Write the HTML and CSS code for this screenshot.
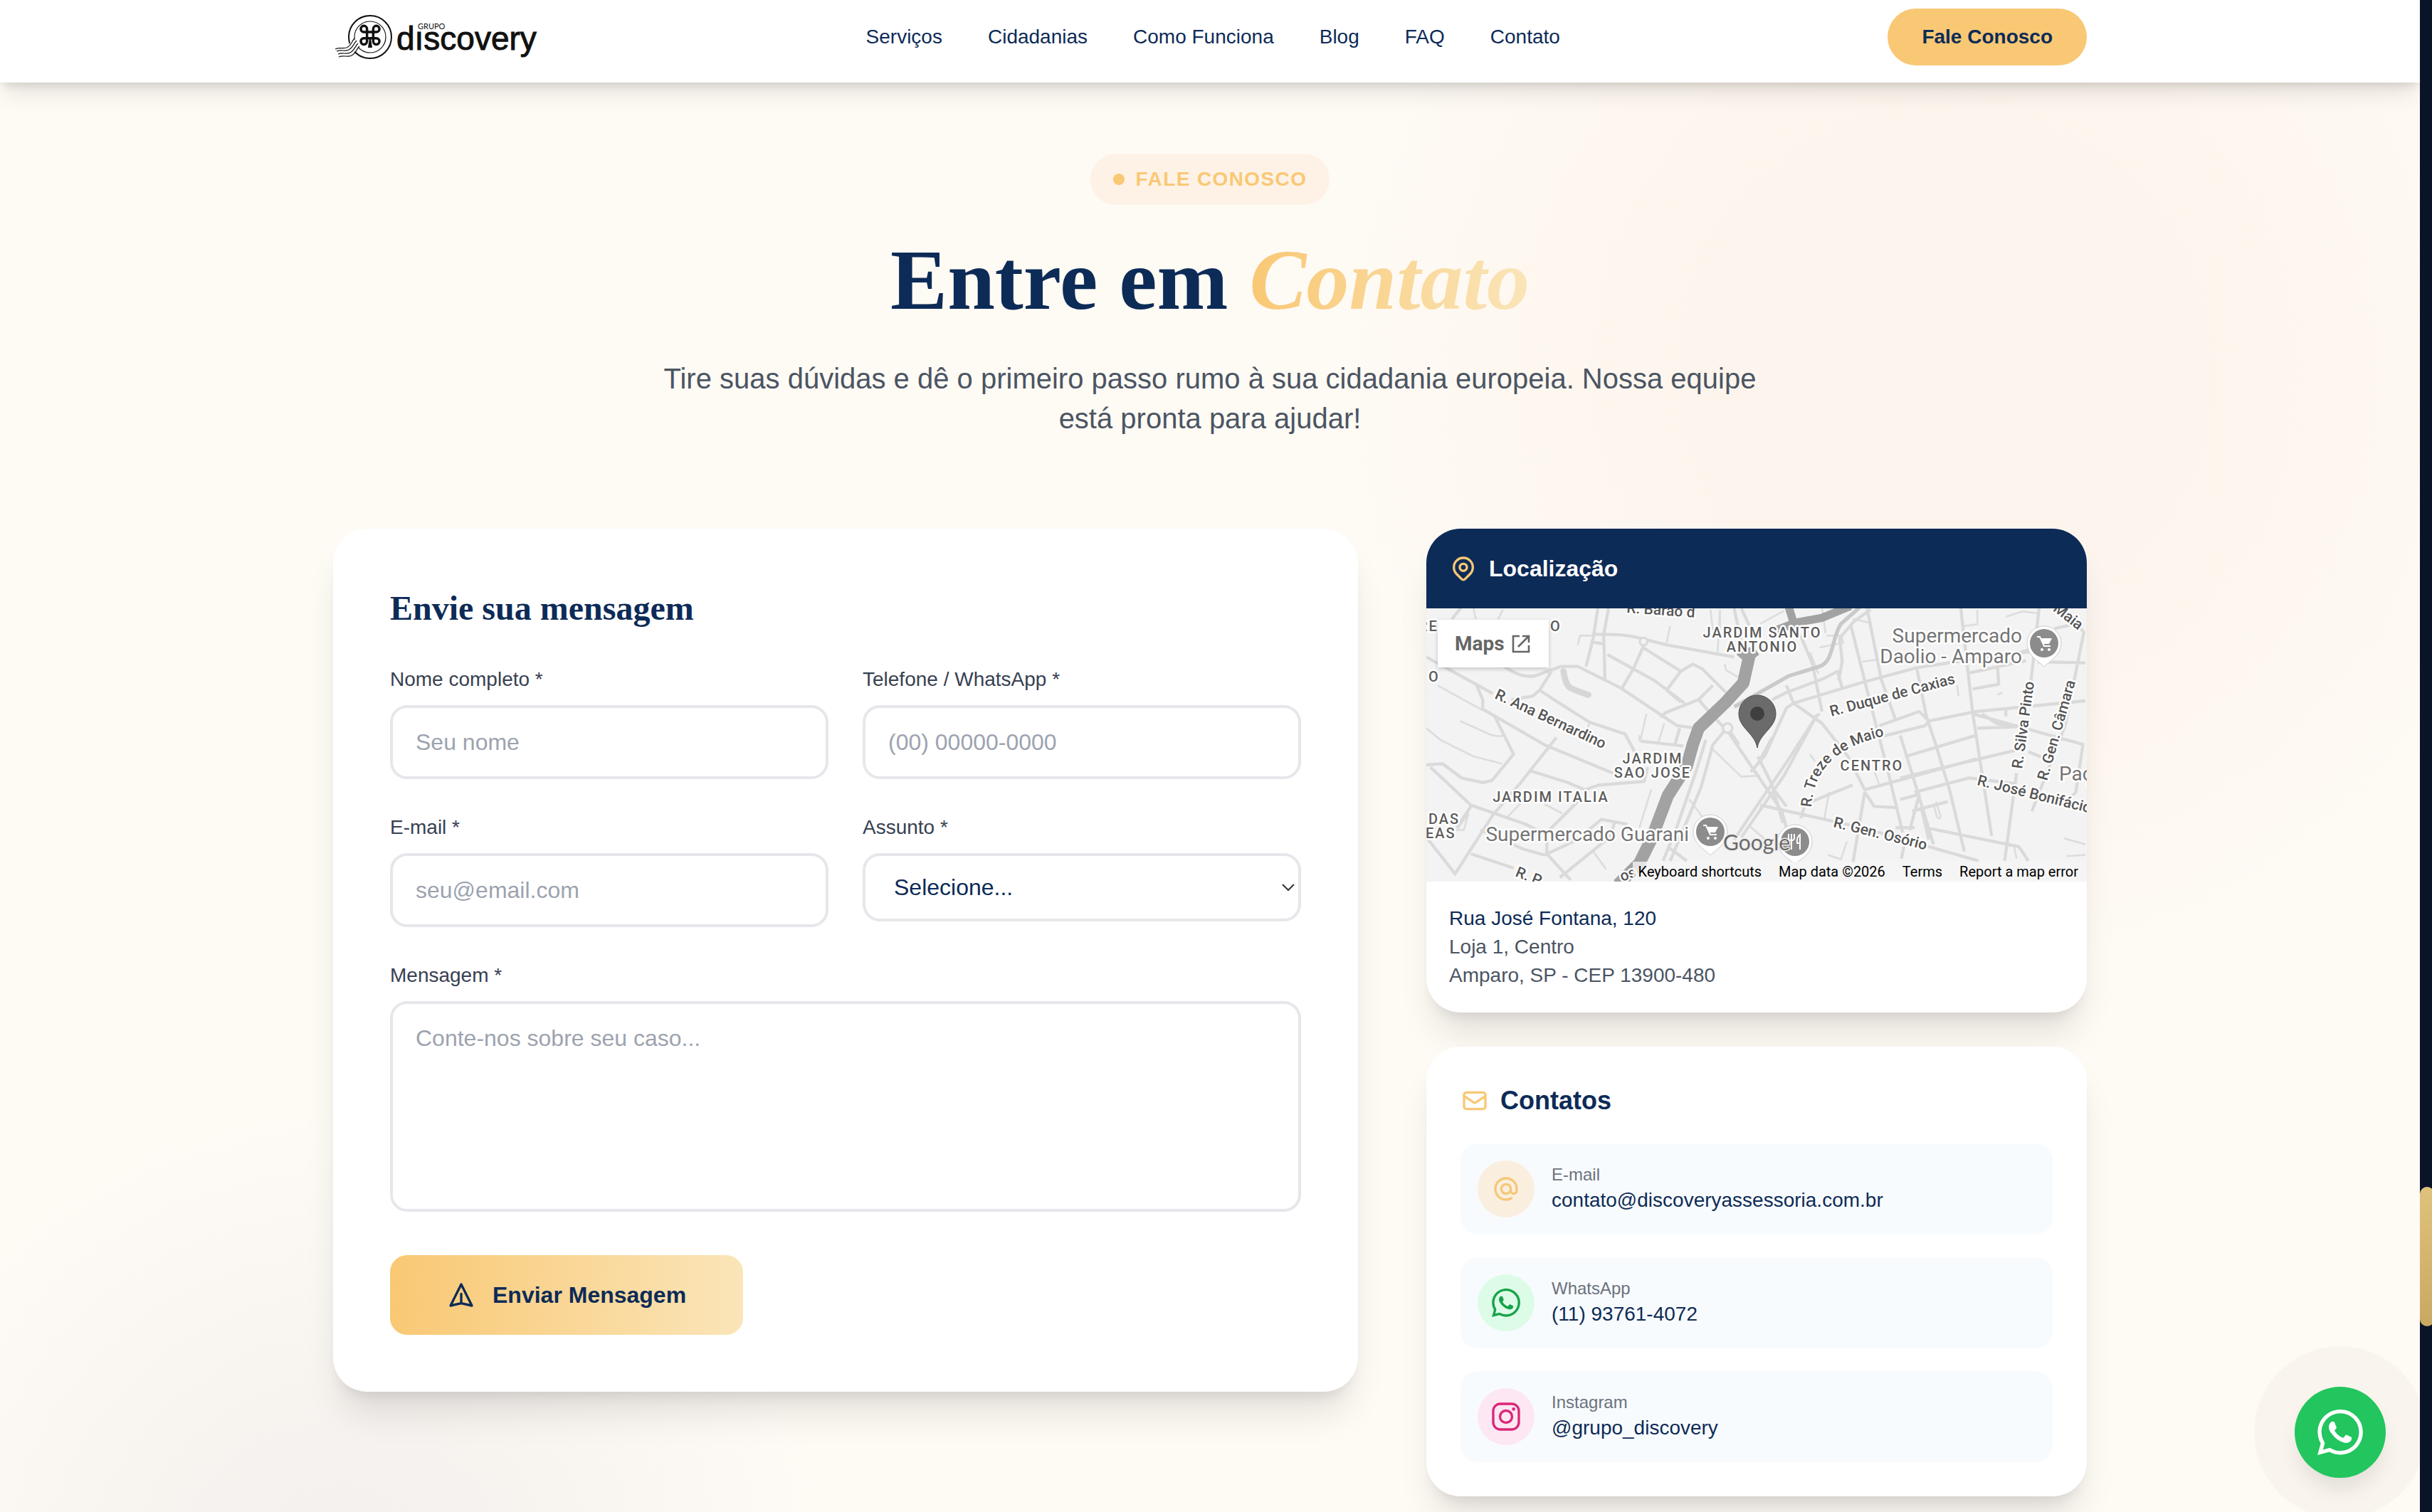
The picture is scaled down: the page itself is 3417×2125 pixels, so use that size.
FILE: index.html
```html
<!doctype html>
<html lang="pt-BR">
<head>
  <meta charset="UTF-8">
  <meta name="viewport" content="width=device-width, initial-scale=1.0">
  <title>Contato - Grupo Discovery</title>
  <link rel="stylesheet" href="styles.css">
</head>
<body>
  <header class="header">
    <div class="container header-inner">
      <a class="logo" href="#">
        <svg width="288" height="80" viewBox="0 0 288 80" role="img" aria-label="Grupo Discovery">
          <circle cx="52" cy="40" r="30" fill="none" stroke="#111" stroke-width="2"/>
          <circle cx="52" cy="40" r="22" fill="none" stroke="#111" stroke-width="1.2"/>
          <!-- clover -->
          <g transform="translate(34.6 20) scale(1.45)" fill="none" stroke="#111" stroke-width="2.4">
            <path d="M18 3a3 3 0 0 0-3 3v12a3 3 0 1 0 3-3H6a3 3 0 1 0 3 3V6a3 3 0 1 0-3 3h12a3 3 0 0 0 0-6z"/>
          </g>
          <path d="M51 42h2l2 13h-6z" fill="#111"/>
          <!-- postmark waves -->
          <path d="M23 58C27 56 30 51 34 47" fill="none" stroke="#fff" stroke-width="13"/>
          <g fill="none" stroke="#111" stroke-width="1.2">
            <path d="M3 57c7-3 10 0 16-2 7-3 7-9 11-13"/>
            <path d="M5 60c7-3 11 1 17-2 6-3 7-9 11-13"/>
            <path d="M7 64c7-3 11 1 17-2 6-3 7-9 11-13"/>
            <path d="M8 68c7-3 12 1 18-2 6-3 7-9 11-13"/>
          </g>
          <text class="logo-name" x="89" y="58">dıscovery</text>
          <text class="logo-group" x="119" y="29">GRUPO</text>
        </svg>
      </a>
      <nav class="nav">
        <a href="#">Serviços</a>
        <a href="#">Cidadanias</a>
        <a href="#">Como Funciona</a>
        <a href="#">Blog</a>
        <a href="#">FAQ</a>
        <a href="#">Contato</a>
      </nav>
      <a class="btn-header" href="#">Fale Conosco</a>
    </div>
  </header>

  <main class="container">
    <section class="hero">
      <span class="badge"><span class="badge-dot"></span>FALE CONOSCO</span>
      <h1>Entre em <em>Contato</em></h1>
      <p>Tire suas dúvidas e dê o primeiro passo rumo à sua cidadania europeia. Nossa equipe está pronta para ajudar!</p>
    </section>

    <div class="content">
      <section class="card form-card">
        <h2>Envie sua mensagem</h2>
        <form class="form">
          <div class="field">
            <label for="nome">Nome completo *</label>
            <input type="text" id="nome" placeholder="Seu nome">
          </div>
          <div class="field">
            <label for="telefone">Telefone / WhatsApp *</label>
            <input type="tel" id="telefone" placeholder="(00) 00000-0000">
          </div>
          <div class="field">
            <label for="email">E-mail *</label>
            <input type="email" id="email" placeholder="seu@email.com">
          </div>
          <div class="field">
            <label for="assunto">Assunto *</label>
            <div class="select-wrap">
              <select id="assunto">
                <option>Selecione...</option>
              </select>
              <svg class="chevron" width="20" height="12" viewBox="0 0 20 12"><path d="M2 2l8 8 8-8" fill="none" stroke="#333" stroke-width="2"/></svg>
            </div>
          </div>
          <div class="field field-full">
            <label for="mensagem">Mensagem *</label>
            <textarea id="mensagem" placeholder="Conte-nos sobre seu caso..."></textarea>
          </div>
          <button type="submit" class="btn-send">
            <svg class="icon" viewBox="0 0 24 24"><path d="M12 19l9 2-9-18-9 18 9-2zm0 0v-8"/></svg>
            Enviar Mensagem
          </button>
        </form>
      </section>

      <aside class="side">
        <section class="card location">
          <h3 class="location-title">
            <svg class="icon" viewBox="0 0 24 24"><path d="M17.657 16.657L13.414 20.9a2 2 0 01-2.827 0l-4.244-4.243a8 8 0 1111.314 0z"/><path d="M15 11a3 3 0 11-6 0 3 3 0 016 0z"/></svg>
            Localização
          </h3>
          <div class="map">
            <svg class="map-canvas" viewBox="0 0 928 384" preserveAspectRatio="xMidYMid slice">
              <defs>
                <path id="treze" d="M541 280C545 225 575 194 650 178L680 172"/>
                <g id="cart">
                  <path d="M0 33C-5 27-24 18-24 0a24 24 0 0 1 48 0C24 18 5 27 0 33z" fill="#fff" stroke="#ccc"/>
                  <circle r="20" fill="#8c8c8c"/>
                  <path d="M-10-9h4l6 13h9" fill="none" stroke="#fff" stroke-width="2"/>
                  <path d="M-5-7H11L7 1H-2z" fill="#fff"/>
                  <circle cx="-3" cy="9" r="2" fill="#fff"/>
                  <circle cx="7" cy="9" r="2" fill="#fff"/>
                </g>
              </defs>
              <g class="roads" transform="translate(-14 -125) scale(.3333)">
                <!-- small streets -->
                <g class="road-thin">
                  <path d="M240 370l10 50M365 380l-20 40M680 530l10-40h50M1070 450l-15 70M1240 380l10 90 30 0 0-90M1280 380l-10 180M1300 610l5 25 50 30M185 850l110 50c30 15 50 15 75 12M42 880l60 50 140 70 120 30M90 700l190 105M970 820l-25 110M1045 860l-25 80M940 910v25M730 860l-25 55M380 1260l75-80M540 1200l75 40M745 1400l55 75M990 1140l-50 160M1240 960l130 125 80-5M1150 1180l60 80M1450 1210h50M1400 1290l60 50 40 60M200 1310l20-70-50 70z"/>
                  <path d="M1450 440l100-55M1710 370l15 110M1700 540l100-20-10-30h-60M1660 560l35 90M1840 420l70 15M1880 600l70-10M2305 450l60-8v-60M2485 410l70-22 70 8M2540 560l100-30M2280 700l5 45M2450 740l20-10M1660 990l20 30M1740 1150l-20 110M1930 1060l20 55M1735 1415l55 18 25-75M2180 1200l15 55q10 15 15-5l-20-60M2730 1345l90 25M2740 1420l80-5M2530 1430l-10-50"/>
                </g>
                <!-- streets -->
                <g class="road">
                  <path d="M42 580l200 110 80 45M190 370l-40 50M370 620c60 40 90 45 130 40l110-40h70l180 90 180 120 60 40 80 10M765 375l-20 130-30 115M810 375l-20 110 5 190M740 485h60c120 0 150 20 260 45l280 50M735 515l50 10M805 570l200 110 125 95M955 540l-40 90-50 85M955 540l160 100M1055 720l60-80 50-30 40 20 100 100M1055 720l60 50M1250 700l-60 60-140 55-20 20M960 510l-5 30M250 690l30 70v40l260 150 290 120M520 720l60 40 150 95 150 50 40 75M520 720l50-80M400 760l90-15 30-25M330 830l80 160-90 110-40 10-90-20-80-60-68 5M60 1045l170 160 230 80 80 40M480 1060l160 50 70 30 60-20 190-15 15-60M590 920L440 1110 320 1250 160 1500M680 1190L550 1320v90l100 110M230 1210l-60 90M230 1410l180 60M270 1310l180 80 90 25 130-60 110-90 110 20M835 1280l-20 60-210 170M160 1490L42 1340M945 935l180 20M1110 880l-20 70"/>
                  <path d="M1190 760l60 70 60 60 190 280 40 60 20 70M1320 890l40 60M1300 890l-50 60-50 180-130 310M1440 1030l60-110M1500 1130l60 80M1060 1380l80 60M1370 1340l180-260 130-240"/>
                  <path d="M1340 375l30 150M1370 375l60 130"/>
                  <path d="M1900 375l60 300 60 170M1830 440l80 320 80 310 60 250M1620 490l50 120 40 200M1780 680l15-80-10-100 60-70 70-50M1500 760l60-30 160-60 55-30 20 70M1560 700l30 75M1590 775l280-85 240-65 300-45 200-25M1670 840l30-20M1590 775l120 85 110 140 70 140 110-30 360-100M1590 775l-30 20-90 200-60 70M1680 840l-130 200-150 220M1440 1000l60 120 45 160M1450 1205l430 95 490 140M1400 1260l-60 90M1620 1260l20-60 200-80M1950 870l170-60 40 40-15 20-180 45M2110 630l40 200 40 120 60 200 60 250M2040 910l40 130 100 330M2295 375l50 440 80 520M2160 850l200-40 460-45M2365 880l160-5-80-15-60-40M2485 830v-25M2345 820l470 130M2345 715l110-20-5-70M2320 650l250-55M2060 1000l300-90M2040 1090l500-120M2100 1150l230-60 200 25M1890 1150l-50 300M1890 1150l40 60 90 5M2040 1180l80-20-40 150M2090 1230l150-40M2130 1220l30 130M2150 1300l390 80 40 60M2020 1300h80M2625 375l-40 360M2530 1070l-50 370M2815 470l-80 400-140 360M2810 950l-30 200-60 60M2580 980l100 40M2820 605l-200-5M2690 460l90-20 30 30M2065 1330l-20 100"/>
                </g>
                <!-- railway side road -->
                <path class="road-mid" d="M1340 790l230-130 130-40c60-20 50-120 90-180l80-70"/>
                <path class="road" d="M1220 930l-40 130-90 260-50 120" fill="none"/>
                <path class="road-dot" d="M620 640c10 60 20 70 50 80l55 20"/>
                <!-- river -->
                <path class="river" d="M1830 365l-120 50-110 20-90 35M1570 370l20 65"/>
                <path class="river river-wide" d="M1405 570L1378 690 1300 775 1190 880 1165 950 1140 1040 1060 1165 990 1350 940 1450 850 1540"/>
                <path d="M1350 570l45 40 50-40-20-30h-50z" fill="#a2a2a2"/>
                <circle class="roundabout" cx="958" cy="515" r="16"/>
                <circle class="roundabout" cx="1312" cy="880" r="20"/>
              </g>
              <g class="street">
                <text transform="translate(281 6) rotate(4)">R. Barão d</text>
                <text transform="translate(95 126) rotate(25)">R. Ana Bernardino</text>
                <text transform="translate(124 376) rotate(22)">R. P</text>
                <text transform="translate(275 384) rotate(-20)">os</text>
                <text transform="translate(569 152) rotate(-15)">R. Duque de Caxias</text>
                <text transform="translate(837 226) rotate(-82)">R. Silva Pinto</text>
                <text transform="translate(872 243) rotate(-74)">R. Gen. Câmara</text>
                <text transform="translate(773 248) rotate(14)">R. José Bonifácio</text>
                <text transform="translate(571 307) rotate(14)">R. Gen. Osório</text>
                <text transform="translate(866 -8) rotate(38)">o Maia</text>
                <text><textPath href="#treze">R. Treze de Maio</textPath></text>
              </g>
              <g class="district">
                <text x="-11" y="32">RE</text>
                <text x="174" y="32">O</text>
                <text x="3" y="103">O</text>
                <text x="472" y="41" text-anchor="middle">JARDIM SANTO</text>
                <text x="472" y="61" text-anchor="middle">ANTONIO</text>
                <text x="318" y="218" text-anchor="middle">JARDIM</text>
                <text x="318" y="238" text-anchor="middle">SAO JOSE</text>
                <text x="175" y="272" text-anchor="middle">JARDIM ITALIA</text>
                <text x="3" y="303">DAS</text>
                <text x="-1" y="323">EAS</text>
                <text x="626" y="228" text-anchor="middle">CENTRO</text>
              </g>
              <g class="place">
                <text x="369" y="327" text-anchor="end">Supermercado Guarani</text>
                <text x="837" y="48" text-anchor="end">Supermercado</text>
                <text x="837" y="77" text-anchor="end">Daolio - Amparo</text>
                <text x="889" y="242">Paço</text>
              </g>
              <use href="#cart" x="399" y="314"/>
              <use href="#cart" x="868" y="49"/>
              <g transform="translate(518 328)">
                <path d="M0 31C-5 26-24 18-24 0a24 24 0 0 1 48 0C24 18 5 26 0 31z" fill="#fff" stroke="#ccc"/>
                <circle r="20" fill="#8c8c8c"/>
                <path d="M-9-11v7q4 5 8 0v-7M-5-11v22M7 11V-10q-5 3-4 12h4" fill="none" stroke="#fff" stroke-width="2"/>
              </g>
              <text class="google" x="417" y="340">Google</text>
              <!-- main pin -->
              <path d="M465 196C462 176 439 168 439 148a26 26 0 0 1 52 0C491 168 468 176 465 196z" fill="#6b6b6b" stroke="#4d4d4d"/>
              <circle cx="465" cy="148" r="10" fill="#3f3f3f"/>
            </svg>
            <a class="map-open" href="#">Maps
              <svg width="26" height="26" viewBox="0 0 26 26"><path d="M11 2H2v22h22v-9M15 2h9v9M24 2L9 17" fill="none" stroke="#666" stroke-width="2.6"/></svg>
            </a>
            <div class="map-footer">
              <a href="#">Keyboard shortcuts</a>
              <span>Map data ©2026</span>
              <a href="#">Terms</a>
              <a href="#">Report a map error</a>
            </div>
          </div>
          <address class="address">
            <strong>Rua José Fontana, 120</strong>
            <span>Loja 1, Centro</span>
            <span>Amparo, SP - CEP 13900-480</span>
          </address>
        </section>

        <section class="card contacts">
          <h3 class="contacts-title">
            <svg class="icon" viewBox="0 0 24 24"><path d="M3 8l7.89 5.26a2 2 0 002.22 0L21 8M5 19h14a2 2 0 002-2V7a2 2 0 00-2-2H5a2 2 0 00-2 2v10a2 2 0 002 2z"/></svg>
            Contatos
          </h3>
          <a class="contact" href="#">
            <span class="contact-icon bg-gold">
              <svg class="icon" viewBox="0 0 24 24"><path d="M16 12a4 4 0 10-8 0 4 4 0 008 0zm0 0v1.500a2.500 2.500 0 005 0V12a9 9 0 10-9 9m4.500-1.206a8.959 8.959 0 01-4.500 1.207"/></svg>
            </span>
            <span class="contact-text"><small>E-mail</small>contato@discoveryassessoria.com.br</span>
          </a>
          <a class="contact" href="#">
            <span class="contact-icon bg-green">
              <svg class="icon-solid" viewBox="0 0 24 24"><path id="whatsapp" d="M17.472 14.382c-.297-.149-1.758-.867-2.030-.967-.273-.099-.471-.148-.670.150-.197.297-.767.966-.940 1.164-.173.199-.347.223-.644.075-.297-.150-1.255-.463-2.390-1.475-.883-.788-1.480-1.761-1.653-2.059-.173-.297-.018-.458.130-.606.134-.133.298-.347.446-.520.149-.174.198-.298.298-.497.099-.198.050-.371-.025-.520-.075-.149-.669-1.612-.916-2.207-.242-.579-.487-.500-.669-.510-.173-.008-.371-.010-.570-.010-.198 0-.520.074-.792.372-.272.297-1.040 1.016-1.040 2.479 0 1.462 1.065 2.875 1.213 3.074.149.198 2.096 3.200 5.077 4.487.709.306 1.262.489 1.694.625.712.227 1.360.195 1.871.118.571-.085 1.758-.719 2.006-1.413.248-.694.248-1.289.173-1.413-.074-.124-.272-.198-.570-.347m-5.421 7.403h-.004a9.870 9.870 0 01-5.031-1.378l-.361-.214-3.741.982.998-3.648-.235-.374a9.860 9.860 0 01-1.510-5.260c.001-5.450 4.436-9.884 9.888-9.884 2.640 0 5.122 1.030 6.988 2.898a9.825 9.825 0 012.893 6.994c-.003 5.450-4.437 9.884-9.885 9.884m8.413-18.297A11.815 11.815 0 0012.050 0C5.495 0 .160 5.335.157 11.892c0 2.096.547 4.142 1.588 5.945L.057 24l6.305-1.654a11.882 11.882 0 005.683 1.448h.005c6.554 0 11.890-5.335 11.893-11.893a11.821 11.821 0 00-3.480-8.413z"/></svg>
            </span>
            <span class="contact-text"><small>WhatsApp</small>(11) 93761-4072</span>
          </a>
          <a class="contact" href="#">
            <span class="contact-icon bg-pink">
              <svg class="icon" viewBox="0 0 24 24"><rect x="1.200" y="1.200" width="21.600" height="21.600" rx="6"/><circle cx="12" cy="12" r="5.100"/><circle cx="18.400" cy="5.600" r="1.400" fill="currentColor" stroke="none"/></svg>
            </span>
            <span class="contact-text"><small>Instagram</small>@grupo_discovery</span>
          </a>
        </section>
      </aside>
    </div>
  </main>

  <a class="whatsapp-float" href="#" aria-label="WhatsApp">
    <svg width="64" height="64" viewBox="0 0 24 24" fill="currentColor"><use href="#whatsapp"/></svg>
  </a>
  <div class="scrollbar"><div class="scrollbar-thumb"></div></div>
</body>
</html>
```

FILE: styles.css
```css
* {
    box-sizing: border-box;
    margin: 0;
    padding: 0;
}

html {
    height: 100%;
    overflow: hidden;
}

body {
    min-height: 100vh;
    padding-right: 17px;
    overflow: hidden;
    font-family: "Liberation Sans", Arial, sans-serif;
    font-size: 28px;
    line-height: 40px;
    color: #0d2b57;
    background:
        radial-gradient(circle 860px at 80% 520px, #fdf5ed 40%, rgba(253, 245, 237, 0)),
        radial-gradient(circle 680px at 480px 2240px, #f4f1ee 15%, rgba(244, 241, 238, 0)),
        #fefaf4;
}

a {
    color: inherit;
    text-decoration: none;
}

.container {
    max-width: 2560px;
    margin: 0 auto;
    padding: 0 48px;
}

/* header */
.header {
    background: #fff;
    box-shadow: 0 20px 30px -6px rgba(0, 0, 0, 0.1), 0 8px 12px -4px rgba(0, 0, 0, 0.1);
}

.header-inner {
    display: flex;
    justify-content: space-between;
    align-items: center;
    padding-top: 12px;
    padding-bottom: 24px;
}

.logo svg {
    display: block;
}

.logo-name {
    font-size: 46px;
    fill: #111;
    stroke: #111;
}

.logo-group {
    font-family: Lato, sans-serif;
    font-size: 11px;
    fill: #111;
}

.nav {
    display: flex;
    gap: 64px;
}

.btn-header {
    padding: 20px 48px;
    border-radius: 40px;
    background: #f9c874;
    font-weight: bold;
}

/* hero */
.hero {
    display: flex;
    flex-direction: column;
    align-items: center;
    padding: 100px 0 127px;
    text-align: center;
}

.badge {
    display: flex;
    align-items: center;
    gap: 16px;
    padding: 16px 32px;
    border-radius: 36px;
    background: #fef2e6;
    color: #f9c874;
    font-weight: bold;
    letter-spacing: 0.05em;
}

.badge-dot {
    width: 16px;
    height: 16px;
    border-radius: 50%;
    background: #f9c874;
}

.hero h1 {
    margin: 46px 0 50px;
    font-family: "Liberation Serif", "Times New Roman", serif;
    font-size: 120px;
    line-height: 120px;
}

.hero h1 em {
    background: linear-gradient(to right, #f9c874, #fae5b8);
    -webkit-background-clip: text;
    background-clip: text;
    color: transparent;
}

.hero p {
    max-width: 1536px;
    font-size: 40px;
    line-height: 56px;
    color: #4b5563;
}

/* cards */
.content {
    display: grid;
    grid-template-columns: 1440fr 928fr;
    align-items: start;
    gap: 96px;
}

.card {
    border-radius: 48px;
    background: #fff;
    box-shadow: 0 40px 50px -10px rgba(0, 0, 0, 0.1), 0 16px 20px -12px rgba(0, 0, 0, 0.1);
}

.icon {
    width: 40px;
    height: 40px;
    flex: none;
    fill: none;
    stroke: currentColor;
    stroke-width: 2;
    stroke-linecap: round;
    stroke-linejoin: round;
}

.icon-solid {
    width: 40px;
    height: 40px;
    fill: currentColor;
}

/* form */
.form-card {
    padding: 80px;
}

.form-card h2 {
    margin-bottom: 48px;
    font-family: "Liberation Serif", "Times New Roman", serif;
    font-size: 48px;
    line-height: 64px;
}

.form {
    display: grid;
    grid-template-columns: 1fr 1fr;
    gap: 48px;
}

.field label {
    display: block;
    margin-bottom: 16px;
    color: #374151;
}

.field-full {
    grid-column: 1 / -1;
    margin-bottom: 13px;
}

.field input,
.field select,
.field textarea {
    display: block;
    width: 100%;
    height: 104px;
    padding: 0 32px;
    border: 4px solid #e5e7eb;
    border-radius: 24px;
    background: #fff;
    color: #0d2b57;
    font-family: inherit;
    font-size: 32px;
}

.field select {
    height: 96px;
    padding: 0 40px;
    appearance: none;
}

.field textarea {
    height: 296px;
    padding: 24px 32px;
    line-height: 48px;
    resize: none;
}

.field input::placeholder,
.field textarea::placeholder {
    color: #9ca3af;
    opacity: 1;
}

.select-wrap {
    position: relative;
}

.chevron {
    position: absolute;
    right: 8px;
    top: 42px;
    pointer-events: none;
}

.btn-send {
    display: flex;
    align-items: center;
    gap: 24px;
    justify-self: start;
    padding: 32px 80px;
    border: none;
    border-radius: 24px;
    background: linear-gradient(to right, #f9c874, #fae5b8);
    color: #0d2b57;
    font-family: inherit;
    font-size: 32px;
    font-weight: bold;
    line-height: 48px;
    cursor: pointer;
}

/* location */
.side {
    display: grid;
    gap: 48px;
}

.location {
    overflow: hidden;
}

.location-title {
    display: flex;
    align-items: center;
    gap: 16px;
    padding: 32px;
    background: #0d2b57;
    color: #fff;
    font-size: 32px;
    line-height: 48px;
}

.location-title .icon,
.contacts-title .icon {
    color: #f9c874;
}

.map {
    position: relative;
    height: 384px;
    background: #f3f3f3;
    overflow: hidden;
    font-family: Roboto, sans-serif;
}

.map-canvas {
    display: block;
    width: 100%;
    height: 100%;
}

.roads path {
    stroke-linejoin: round;
}

.road-thin path,
.road path,
.road-mid,
.road-dot,
.river {
    fill: none;
}

.road-thin {
    stroke: #dddddd;
    stroke-width: 8;
}

.road {
    stroke: #dadada;
    stroke-width: 13;
}

.road-mid {
    stroke: #c9c9c9;
    stroke-width: 16;
}

.road-dot {
    stroke: #d6d6d6;
    stroke-width: 26;
    stroke-linecap: round;
}

.river {
    stroke: #a2a2a2;
    stroke-width: 34;
}

.river-wide {
    stroke-width: 52;
}

.roundabout {
    fill: #f3f3f3;
    stroke: #dadada;
    stroke-width: 10;
}

.street text,
.district text,
.place text {
    paint-order: stroke;
    stroke: #fff;
    stroke-width: 5px;
    stroke-linejoin: round;
}

.street {
    font-size: 21px;
    font-weight: 500;
    fill: #555;
}

.district {
    font-size: 20px;
    font-weight: 500;
    letter-spacing: 2px;
    fill: #5c5c5c;
}

.place {
    font-size: 28px;
    fill: #757575;
}

.google {
    font-family: Lato, sans-serif;
    font-size: 30px;
    fill: #6a6a6a;
    paint-order: stroke;
    stroke: #eee;
    stroke-width: 3px;
}

.map-open {
    position: absolute;
    left: 16px;
    top: 16px;
    display: flex;
    align-items: center;
    gap: 10px;
    padding: 0 26px 0 24px;
    background: #fff;
    box-shadow: 0 2px 6px rgba(0, 0, 0, 0.2);
    color: #666;
    font-size: 28px;
    font-weight: bold;
    line-height: 67px;
}

.map-footer {
    position: absolute;
    right: 0;
    bottom: 0;
    display: flex;
    gap: 24px;
    padding: 0 12px 0 8px;
    background: rgba(245, 245, 245, 0.8);
    color: #000;
    font-size: 20px;
    line-height: 28px;
}

.address {
    display: flex;
    flex-direction: column;
    padding: 32px;
    color: #4b5563;
    font-style: normal;
}

.address strong {
    color: #0d2b57;
    font-weight: normal;
}

/* contacts */
.contacts {
    display: grid;
    gap: 32px;
    padding: 48px;
}

.contacts-title {
    display: flex;
    align-items: center;
    gap: 16px;
    font-size: 36px;
    line-height: 56px;
}

.contact {
    display: flex;
    align-items: center;
    gap: 24px;
    padding: 24px;
    border-radius: 24px;
    background: #f8fbfd;
}

.contact-icon {
    display: flex;
    align-items: center;
    justify-content: center;
    width: 80px;
    height: 80px;
    border-radius: 50%;
}

.bg-gold {
    background: #faeedf;
    color: #f4c876;
}

.bg-green {
    background: #dcfce7;
    color: #16a34a;
}

.bg-pink {
    background: #fce7f3;
    color: #db2777;
}

.contact-text small {
    display: block;
    color: #6b7280;
    font-size: 24px;
    line-height: 32px;
}

/* floating button */
.whatsapp-float {
    position: fixed;
    right: 65px;
    bottom: 48px;
    display: flex;
    align-items: center;
    justify-content: center;
    width: 128px;
    height: 128px;
    border-radius: 50%;
    background: #22c55e;
    color: #fff;
    box-shadow: 0 20px 30px -6px rgba(0, 0, 0, 0.1), 0 0 0 57px rgba(90, 110, 60, 0.03);
}

.scrollbar {
    position: fixed;
    top: 0;
    right: 0;
    width: 17px;
    height: 100vh;
    background: #0a1428;
    overflow: hidden;
}

.scrollbar-thumb {
    width: 20px;
    height: 196px;
    margin-top: 1668px;
    border-radius: 10px;
    background: linear-gradient(#dfc27d, #c9a961);
}
```
